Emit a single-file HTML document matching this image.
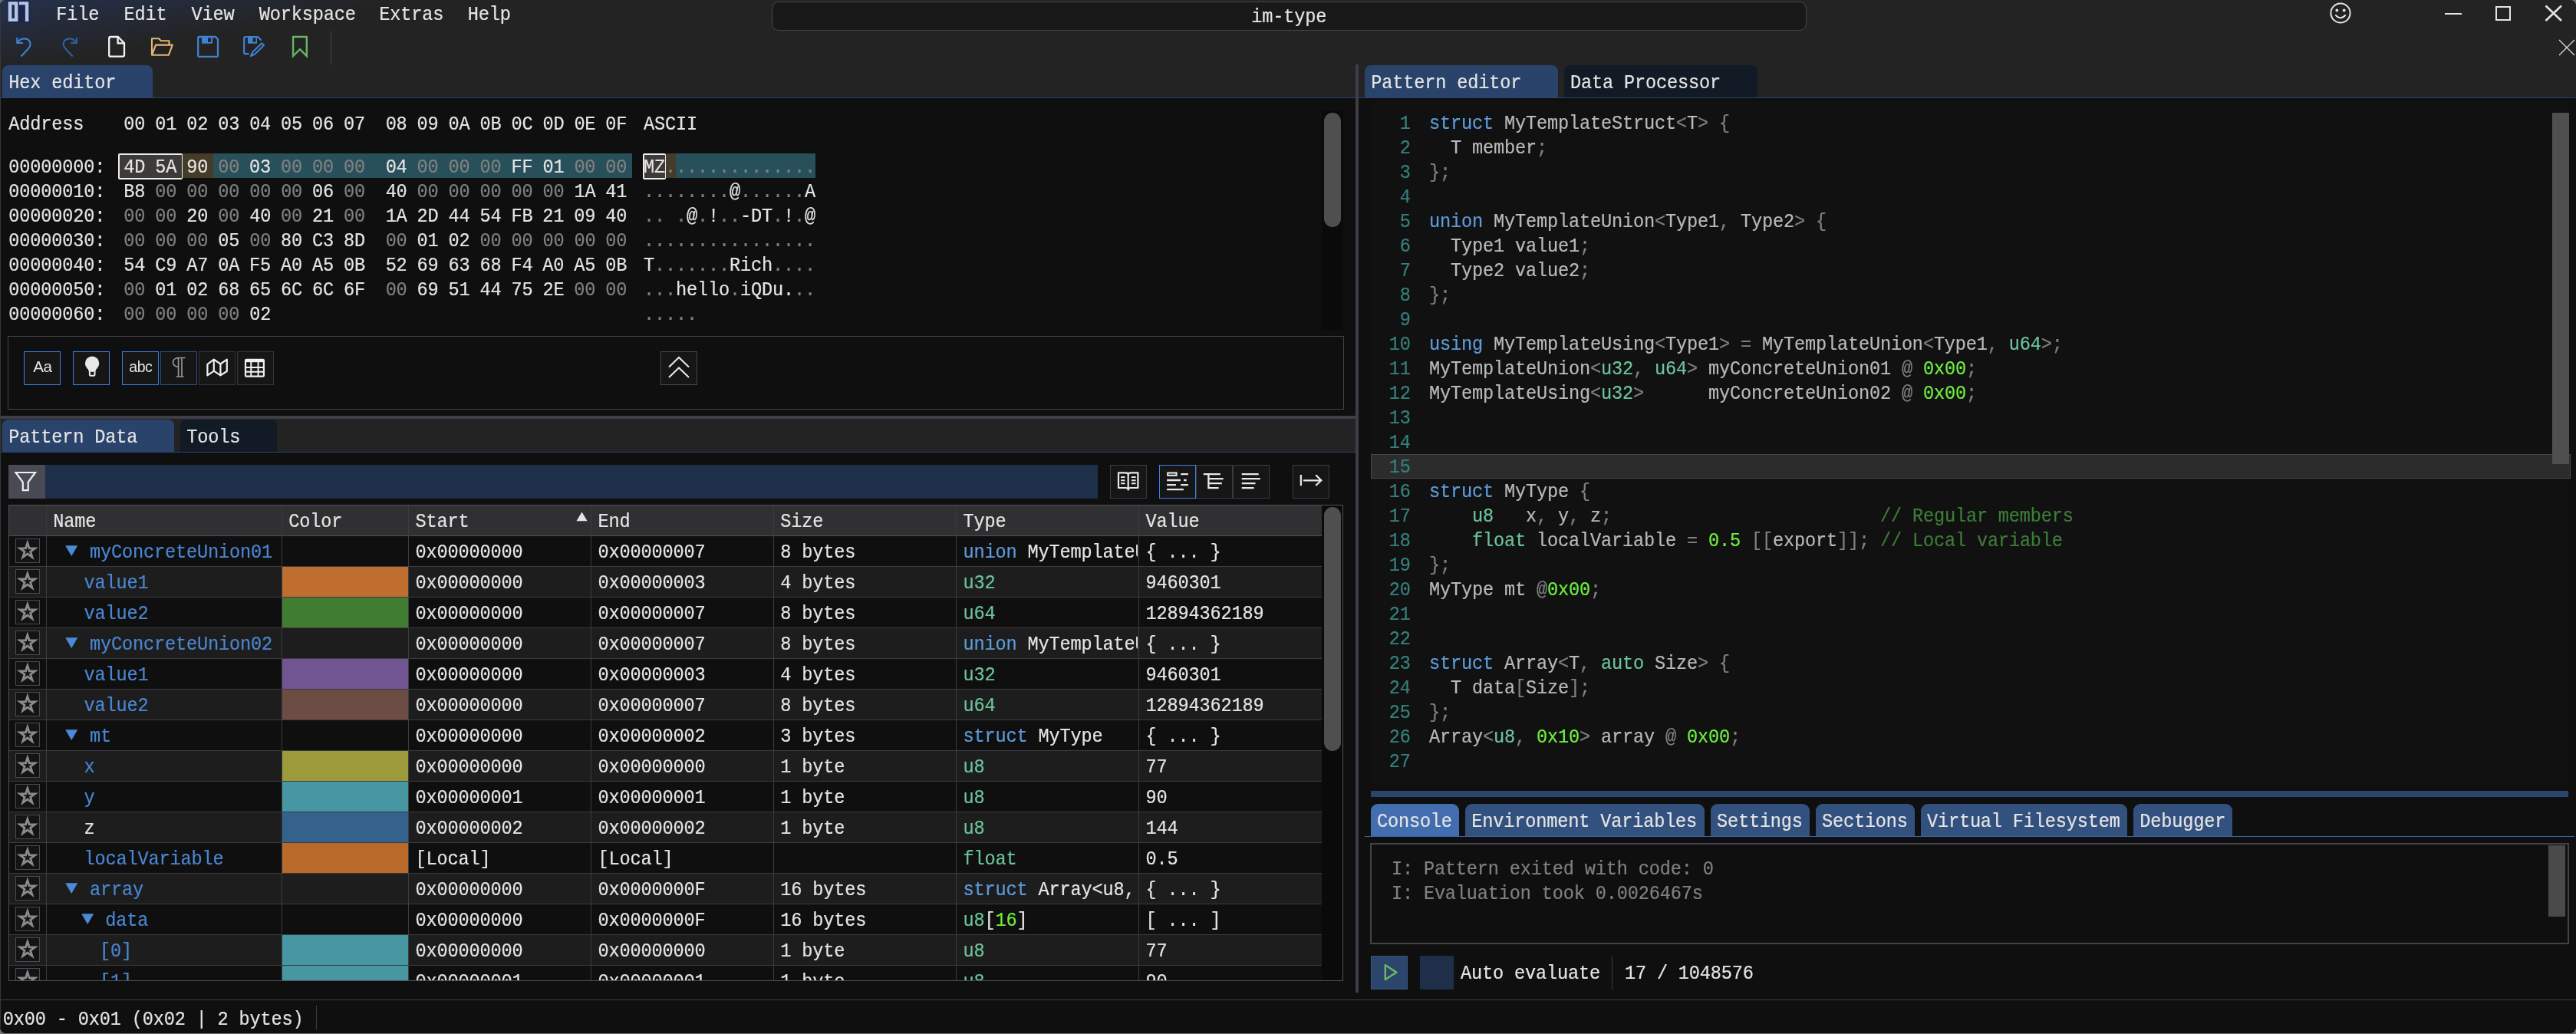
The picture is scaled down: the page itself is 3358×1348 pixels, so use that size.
<!DOCTYPE html>
<html><head><meta charset="utf-8"><title>ImHex</title><style>
html,body{margin:0;padding:0;background:#66727f;}
body{width:3358px;height:1348px;position:relative;overflow:hidden;font-family:"Liberation Mono",monospace;}
.b{position:absolute;box-sizing:border-box;}
.t{position:absolute;white-space:pre;font-family:"Liberation Mono",monospace;font-size:23.6px;line-height:30px;height:30px;color:#e4e4e4;transform:scaleY(1.09);transform-origin:0 21.5px;-webkit-text-stroke:0.2px currentColor;}
.t i{font-style:normal;}
#root{position:absolute;left:0;top:0;width:3358px;height:1347.4px;overflow:hidden;will-change:transform;border-radius:8px;background:#0f0f0f;}
</style></head>
<body><div id="root">
<div class="b" style="left:0.00px;top:0.00px;width:3358.00px;height:128.00px;background:#232323;"></div>
<div class="b" style="left:0.00px;top:0.00px;width:700.00px;height:84.00px;background:linear-gradient(170.2deg, rgba(38,60,110,0.55) 0%, rgba(38,60,110,0) 46%);"></div>
<div class="b" style="left:9.40px;top:0.00px;width:29.20px;height:29.50px;background:#1a2748;"></div>
<svg class="b" style="left:10.00px;top:2.00px;" width="28" height="27" viewBox="0 0 28 27"><path d="M0.7 0.2 H13.4 V26.1 H0.7 Z M5.4 4.25 V21.9 H8.9 V4.25 Z" fill="#b4c4ea" fill-rule="evenodd"/><path d="M15 0.2 H27.3 V26.1 H22.9 V4.25 H15 Z" fill="#b4c4ea"/></svg>
<span class="t" style="left:73.20px;top:4.75px;letter-spacing:-0.162px;">File</span>
<span class="t" style="left:161.40px;top:4.75px;letter-spacing:-0.162px;">Edit</span>
<span class="t" style="left:249.60px;top:4.75px;letter-spacing:-0.162px;">View</span>
<span class="t" style="left:337.80px;top:4.75px;letter-spacing:-0.162px;">Workspace</span>
<span class="t" style="left:494.30px;top:4.75px;letter-spacing:-0.162px;">Extras</span>
<span class="t" style="left:609.80px;top:4.75px;letter-spacing:-0.162px;">Help</span>
<div class="b" style="left:1005.50px;top:2.00px;width:1349.00px;height:38.00px;background:#191919;border:1.2px solid #45454f;border-radius:9px;"></div>
<span class="t" style="left:1631.30px;top:8.10px;letter-spacing:-0.162px;">im-type</span>
<svg class="b" style="left:3036.00px;top:2.00px;" width="30" height="30" viewBox="0 0 30 30"><circle cx="15" cy="15" r="12.6" fill="none" stroke="#e4e4e4" stroke-width="2"/><circle cx="10.3" cy="11.5" r="1.9" fill="#e4e4e4"/><circle cx="19.7" cy="11.5" r="1.9" fill="#e4e4e4"/><path d="M8.3 17.5 Q15 25 21.7 17.5" fill="none" stroke="#e4e4e4" stroke-width="2"/></svg>
<div class="b" style="left:3187.00px;top:16.80px;width:22.00px;height:2.30px;background:#e4e4e4;"></div>
<div class="b" style="left:3253.40px;top:7.60px;width:19.80px;height:19.00px;border:2.2px solid #e4e4e4;"></div>
<svg class="b" style="left:3316.00px;top:5.00px;" width="26" height="24" viewBox="0 0 26 24"><path d="M2.5 2.5 L23 22 M23 2.5 L2.5 22" stroke="#e4e4e4" stroke-width="2.6" fill="none"/></svg>
<svg class="b" style="left:3334.00px;top:50.00px;" width="24" height="24" viewBox="0 0 24 24"><path d="M2 2 L22 22 M22 2 L2 22" stroke="#e4e4e4" stroke-width="1.1" fill="none"/></svg>
<svg class="b" style="left:18.00px;top:44.00px;" width="30" height="34" viewBox="0 0 30 34"><path d="M4.3 5 V12 H12" fill="none" stroke="#3f82d2" stroke-width="2.1"/><path d="M5.2 11.5 C8 5.5 16.5 5 20 9 C23.5 13.5 21 17.5 17.5 21 L9.5 29.5" fill="none" stroke="#3f82d2" stroke-width="2.1"/></svg>
<svg class="b" style="left:75.00px;top:44.00px;" width="30" height="34" viewBox="0 0 30 34"><path d="M24.9 5 V12 H17.2" fill="none" stroke="#2f62a0" stroke-width="2.1"/><path d="M24 11.5 C21.2 5.5 12.7 5 9.2 9 C5.7 13.5 8.2 17.5 11.7 21 L19.7 29.5" fill="none" stroke="#2f62a0" stroke-width="2.1"/></svg>
<svg class="b" style="left:138.00px;top:44.00px;" width="30" height="34" viewBox="0 0 30 34"><path d="M4.2 6 Q4.2 4 6.2 4 H15.8 L24 12.2 V27.8 Q24 29.7 22 29.7 H6.2 Q4.2 29.7 4.2 27.7 Z" fill="none" stroke="#f4f4f4" stroke-width="2.3"/><path d="M15.6 4.5 V12.4 H23.5" fill="none" stroke="#f4f4f4" stroke-width="2.3"/></svg>
<svg class="b" style="left:194.00px;top:44.00px;" width="36" height="34" viewBox="0 0 36 34"><path d="M4 27.5 V6.2 H13 L16 9.2 H26.5 V14.5" fill="none" stroke="#e0b877" stroke-width="2.1" stroke-linejoin="round"/><path d="M4 27.8 L9 14.6 H30.8 L25.8 27.8 Z" fill="none" stroke="#e0b877" stroke-width="2.1" stroke-linejoin="round"/></svg>
<svg class="b" style="left:254.00px;top:44.00px;" width="36" height="34" viewBox="0 0 36 34"><path d="M4.2 5 Q4.2 4 5.2 4 H27 L30 7.2 V28.8 Q30 29.8 29 29.8 H5.2 Q4.2 29.8 4.2 28.8 Z" fill="none" stroke="#3f82d2" stroke-width="2.3"/><path d="M9 4 H23 V12.8 H9 Z M17 5.2 V10.8 H21 V5.2 Z" fill="#3f82d2" fill-rule="evenodd"/></svg>
<svg class="b" style="left:314.00px;top:44.00px;" width="36" height="34" viewBox="0 0 36 34"><path d="M10.6 26.2 H6 Q4.2 26.2 4.2 24.4 V5.8 Q4.2 4 6 4 H22 L26.5 8.5" fill="none" stroke="#3f82d2" stroke-width="2.2"/><path d="M9 4 H21 V12.8 H9 Z M15.6 5.2 V10.8 H19.4 V5.2 Z" fill="#3f82d2" fill-rule="evenodd"/><path d="M13 29.2 L15.2 24 L27.3 12.2 L30 15 L18 26.8 Z" fill="none" stroke="#3f82d2" stroke-width="2" stroke-linejoin="round"/><path d="M12.2 30 L14.6 24.5 L17.6 27.5 Z" fill="#3f82d2"/></svg>
<svg class="b" style="left:378.00px;top:44.00px;" width="28" height="34" viewBox="0 0 28 34"><path d="M4.1 4 H21.8 V29 L13 20.2 L4.1 29 Z" fill="none" stroke="#69b466" stroke-width="2.4" stroke-linejoin="miter"/></svg>
<div class="b" style="left:430.70px;top:40.00px;width:1.30px;height:44.00px;background:#44444c;"></div>
<div class="b" style="left:3.00px;top:85.00px;width:196.00px;height:42.50px;background:#29436b;border-radius:8px 8px 0 0;"></div>
<span class="t" style="left:11.30px;top:93.50px;letter-spacing:-0.162px;">Hex editor</span>
<div class="b" style="left:1779.00px;top:85.00px;width:252.00px;height:42.50px;background:#29436b;border-radius:8px 8px 0 0;"></div>
<span class="t" style="left:1787.20px;top:93.50px;letter-spacing:-0.162px;">Pattern editor</span>
<div class="b" style="left:2038.60px;top:85.00px;width:252.00px;height:42.50px;background:#121a26;border-radius:8px 8px 0 0;"></div>
<span class="t" style="left:2047.00px;top:93.50px;letter-spacing:-0.162px;">Data Processor</span>
<div class="b" style="left:0.00px;top:127.00px;width:3358.00px;height:1.30px;background:#29436b;"></div>
<div class="b" style="left:0.00px;top:128.30px;width:3358.00px;height:1219.70px;background:#0f0f0f;"></div>
<div class="b" style="left:1766.60px;top:84.00px;width:4.60px;height:1210.00px;background:#3e3e47;"></div>
<div class="b" style="left:0.00px;top:542.00px;width:1766.60px;height:4.00px;background:#3e3e47;"></div>
<span class="t" style="left:11.30px;top:147.50px;letter-spacing:-0.162px;">Address</span>
<span class="t" style="left:161.30px;top:147.50px;letter-spacing:-0.162px;">00</span>
<span class="t" style="left:202.26px;top:147.50px;letter-spacing:-0.162px;">01</span>
<span class="t" style="left:243.22px;top:147.50px;letter-spacing:-0.162px;">02</span>
<span class="t" style="left:284.18px;top:147.50px;letter-spacing:-0.162px;">03</span>
<span class="t" style="left:325.14px;top:147.50px;letter-spacing:-0.162px;">04</span>
<span class="t" style="left:366.10px;top:147.50px;letter-spacing:-0.162px;">05</span>
<span class="t" style="left:407.06px;top:147.50px;letter-spacing:-0.162px;">06</span>
<span class="t" style="left:448.02px;top:147.50px;letter-spacing:-0.162px;">07</span>
<span class="t" style="left:502.63px;top:147.50px;letter-spacing:-0.162px;">08</span>
<span class="t" style="left:543.59px;top:147.50px;letter-spacing:-0.162px;">09</span>
<span class="t" style="left:584.55px;top:147.50px;letter-spacing:-0.162px;">0A</span>
<span class="t" style="left:625.51px;top:147.50px;letter-spacing:-0.162px;">0B</span>
<span class="t" style="left:666.47px;top:147.50px;letter-spacing:-0.162px;">0C</span>
<span class="t" style="left:707.43px;top:147.50px;letter-spacing:-0.162px;">0D</span>
<span class="t" style="left:748.39px;top:147.50px;letter-spacing:-0.162px;">0E</span>
<span class="t" style="left:789.35px;top:147.50px;letter-spacing:-0.162px;">0F</span>
<span class="t" style="left:839.00px;top:147.50px;letter-spacing:-0.162px;">ASCII</span>
<div class="b" style="left:278.00px;top:200.00px;width:546.00px;height:32.00px;background:#28505a;"></div>
<div class="b" style="left:237.00px;top:200.00px;width:41.00px;height:32.00px;background:#443b28;"></div>
<div class="b" style="left:154.00px;top:200.00px;width:83.60px;height:33.80px;background:#3d3a37;border:2px solid #ececec;border-radius:2px;border-right-width:1.3px;"></div>
<div class="b" style="left:880.50px;top:200.00px;width:182.30px;height:32.00px;background:#28505a;"></div>
<div class="b" style="left:868.00px;top:200.00px;width:12.70px;height:32.00px;background:#443b28;"></div>
<div class="b" style="left:837.80px;top:200.00px;width:30.60px;height:33.80px;background:#3d3a37;border:2px solid #ececec;border-radius:2px;border-right-width:1.3px;"></div>
<span class="t" style="left:11.30px;top:203.70px;letter-spacing:-0.162px;">00000000:</span>
<span class="t" style="left:161.30px;top:203.70px;letter-spacing:-0.162px;word-spacing:-1.04px;">4D 5A 90 <i style="color:#808080">00</i> 03 <i style="color:#808080">00</i> <i style="color:#808080">00</i> <i style="color:#808080">00</i></span>
<span class="t" style="left:502.63px;top:203.70px;letter-spacing:-0.162px;word-spacing:-1.04px;">04 <i style="color:#808080">00</i> <i style="color:#808080">00</i> <i style="color:#808080">00</i> FF 01 <i style="color:#808080">00</i> <i style="color:#808080">00</i></span>
<span class="t" style="left:839.00px;top:203.70px;letter-spacing:-0.162px;">MZ<i style="color:#808080">.</i><i style="color:#808080">.</i><i style="color:#808080">.</i><i style="color:#808080">.</i><i style="color:#808080">.</i><i style="color:#808080">.</i><i style="color:#808080">.</i><i style="color:#808080">.</i><i style="color:#808080">.</i><i style="color:#808080">.</i><i style="color:#808080">.</i><i style="color:#808080">.</i><i style="color:#808080">.</i><i style="color:#808080">.</i></span>
<span class="t" style="left:11.30px;top:235.70px;letter-spacing:-0.162px;">00000010:</span>
<span class="t" style="left:161.30px;top:235.70px;letter-spacing:-0.162px;word-spacing:-1.04px;">B8 <i style="color:#808080">00</i> <i style="color:#808080">00</i> <i style="color:#808080">00</i> <i style="color:#808080">00</i> <i style="color:#808080">00</i> 06 <i style="color:#808080">00</i></span>
<span class="t" style="left:502.63px;top:235.70px;letter-spacing:-0.162px;word-spacing:-1.04px;">40 <i style="color:#808080">00</i> <i style="color:#808080">00</i> <i style="color:#808080">00</i> <i style="color:#808080">00</i> <i style="color:#808080">00</i> 1A 41</span>
<span class="t" style="left:839.00px;top:235.70px;letter-spacing:-0.162px;"><i style="color:#808080">.</i><i style="color:#808080">.</i><i style="color:#808080">.</i><i style="color:#808080">.</i><i style="color:#808080">.</i><i style="color:#808080">.</i><i style="color:#808080">.</i><i style="color:#808080">.</i>@<i style="color:#808080">.</i><i style="color:#808080">.</i><i style="color:#808080">.</i><i style="color:#808080">.</i><i style="color:#808080">.</i><i style="color:#808080">.</i>A</span>
<span class="t" style="left:11.30px;top:267.70px;letter-spacing:-0.162px;">00000020:</span>
<span class="t" style="left:161.30px;top:267.70px;letter-spacing:-0.162px;word-spacing:-1.04px;"><i style="color:#808080">00</i> <i style="color:#808080">00</i> 20 <i style="color:#808080">00</i> 40 <i style="color:#808080">00</i> 21 <i style="color:#808080">00</i></span>
<span class="t" style="left:502.63px;top:267.70px;letter-spacing:-0.162px;word-spacing:-1.04px;">1A 2D 44 54 FB 21 09 40</span>
<span class="t" style="left:839.00px;top:267.70px;letter-spacing:-0.162px;"><i style="color:#808080">.</i><i style="color:#808080">.</i> <i style="color:#808080">.</i>@<i style="color:#808080">.</i>!<i style="color:#808080">.</i><i style="color:#808080">.</i>-DT<i style="color:#808080">.</i>!<i style="color:#808080">.</i>@</span>
<span class="t" style="left:11.30px;top:299.70px;letter-spacing:-0.162px;">00000030:</span>
<span class="t" style="left:161.30px;top:299.70px;letter-spacing:-0.162px;word-spacing:-1.04px;"><i style="color:#808080">00</i> <i style="color:#808080">00</i> <i style="color:#808080">00</i> 05 <i style="color:#808080">00</i> 80 C3 8D</span>
<span class="t" style="left:502.63px;top:299.70px;letter-spacing:-0.162px;word-spacing:-1.04px;"><i style="color:#808080">00</i> 01 02 <i style="color:#808080">00</i> <i style="color:#808080">00</i> <i style="color:#808080">00</i> <i style="color:#808080">00</i> <i style="color:#808080">00</i></span>
<span class="t" style="left:839.00px;top:299.70px;letter-spacing:-0.162px;"><i style="color:#808080">.</i><i style="color:#808080">.</i><i style="color:#808080">.</i><i style="color:#808080">.</i><i style="color:#808080">.</i><i style="color:#808080">.</i><i style="color:#808080">.</i><i style="color:#808080">.</i><i style="color:#808080">.</i><i style="color:#808080">.</i><i style="color:#808080">.</i><i style="color:#808080">.</i><i style="color:#808080">.</i><i style="color:#808080">.</i><i style="color:#808080">.</i><i style="color:#808080">.</i></span>
<span class="t" style="left:11.30px;top:331.70px;letter-spacing:-0.162px;">00000040:</span>
<span class="t" style="left:161.30px;top:331.70px;letter-spacing:-0.162px;word-spacing:-1.04px;">54 C9 A7 0A F5 A0 A5 0B</span>
<span class="t" style="left:502.63px;top:331.70px;letter-spacing:-0.162px;word-spacing:-1.04px;">52 69 63 68 F4 A0 A5 0B</span>
<span class="t" style="left:839.00px;top:331.70px;letter-spacing:-0.162px;">T<i style="color:#808080">.</i><i style="color:#808080">.</i><i style="color:#808080">.</i><i style="color:#808080">.</i><i style="color:#808080">.</i><i style="color:#808080">.</i><i style="color:#808080">.</i>Rich<i style="color:#808080">.</i><i style="color:#808080">.</i><i style="color:#808080">.</i><i style="color:#808080">.</i></span>
<span class="t" style="left:11.30px;top:363.70px;letter-spacing:-0.162px;">00000050:</span>
<span class="t" style="left:161.30px;top:363.70px;letter-spacing:-0.162px;word-spacing:-1.04px;"><i style="color:#808080">00</i> 01 02 68 65 6C 6C 6F</span>
<span class="t" style="left:502.63px;top:363.70px;letter-spacing:-0.162px;word-spacing:-1.04px;"><i style="color:#808080">00</i> 69 51 44 75 2E <i style="color:#808080">00</i> <i style="color:#808080">00</i></span>
<span class="t" style="left:839.00px;top:363.70px;letter-spacing:-0.162px;"><i style="color:#808080">.</i><i style="color:#808080">.</i><i style="color:#808080">.</i>hello<i style="color:#808080">.</i>iQDu.<i style="color:#808080">.</i><i style="color:#808080">.</i></span>
<span class="t" style="left:11.30px;top:395.70px;letter-spacing:-0.162px;">00000060:</span>
<span class="t" style="left:161.30px;top:395.70px;letter-spacing:-0.162px;word-spacing:-1.04px;"><i style="color:#808080">00</i> <i style="color:#808080">00</i> <i style="color:#808080">00</i> <i style="color:#808080">00</i> 02</span>
<span class="t" style="left:839.00px;top:395.70px;letter-spacing:-0.162px;"><i style="color:#808080">.</i><i style="color:#808080">.</i><i style="color:#808080">.</i><i style="color:#808080">.</i><i style="color:#808080">.</i></span>
<div class="b" style="left:1723.40px;top:144.00px;width:27.60px;height:285.50px;background:#0a0a0a;"></div>
<div class="b" style="left:1726.00px;top:146.70px;width:21.80px;height:149.60px;background:#4f4f4f;border-radius:11px;"></div>
<div class="b" style="left:10.40px;top:438.20px;width:1742.00px;height:96.30px;border:1.9px solid #42424b;"></div>
<div class="b" style="left:31.20px;top:458.00px;width:47.60px;height:43.60px;background:#161616;border:1.2px solid #3d7fe0;"></div>
<div class="b" style="left:95.20px;top:458.00px;width:47.60px;height:43.60px;background:#161616;border:1.2px solid #3d7fe0;"></div>
<div class="b" style="left:159.20px;top:458.00px;width:47.60px;height:43.60px;background:#161616;border:1.2px solid #3d7fe0;"></div>
<div class="b" style="left:209.20px;top:458.00px;width:47.60px;height:43.60px;background:#161616;border:1.2px solid #2b4f8a;"></div>
<div class="b" style="left:259.20px;top:458.00px;width:47.60px;height:43.60px;background:#161616;border:1.2px solid #35353b;"></div>
<div class="b" style="left:309.20px;top:458.00px;width:47.60px;height:43.60px;background:#161616;border:1.2px solid #35353b;"></div>
<div class="b" style="left:861.20px;top:458.00px;width:47.60px;height:43.60px;background:#161616;border:1.2px solid #45454f;"></div>
<span class="b" style="left:43.2px;top:466.2px;font:20.6px 'Liberation Sans',sans-serif;color:#e4e4e4;letter-spacing:-0.4px;line-height:24px">Aa</span>
<svg class="b" style="left:105.00px;top:461.00px;" width="30" height="34" viewBox="0 0 30 34"><circle cx="15.1" cy="12.8" r="9.2" fill="#e8e8e8"/><path d="M10 18.5 H20.2 V22.5 H10 Z" fill="#e8e8e8"/><rect x="11.9" y="22.6" width="6.6" height="6.2" rx="1.2" fill="none" stroke="#e8e8e8" stroke-width="2.1"/></svg>
<span class="b" style="left:168.3px;top:465.6px;font:19.6px 'Liberation Sans',sans-serif;color:#e4e4e4;letter-spacing:-0.55px;line-height:24px">abc</span>
<svg class="b" style="left:219.00px;top:464.00px;" width="26" height="30" viewBox="0 0 26 30"><path d="M12 2.5 H22.5 M13.6 2.5 V27 M18 2.5 V27 M10.5 27 H20.5" stroke="#969696" stroke-width="1.7" fill="none"/><path d="M13.6 2.6 C4.2 2.6 4.2 14.2 13.6 14.2" fill="none" stroke="#969696" stroke-width="1.7"/></svg>
<svg class="b" style="left:260.00px;top:460.00px;" width="44" height="36" viewBox="0 0 44 36"><path d="M10.4 14.9 L18.8 8.7 L27.4 14.5 L35.8 8.7 V24 L27.4 29.4 L18.8 23.6 L10.4 29.4 Z M18.8 8.7 V23.6 M27.4 14.5 V29.4" fill="none" stroke="#f0f0f0" stroke-width="2.2" stroke-linejoin="round"/></svg>
<svg class="b" style="left:310.00px;top:460.00px;" width="44" height="36" viewBox="0 0 44 36"><rect x="10" y="8.8" width="23.9" height="21.9" rx="1.2" fill="none" stroke="#f0f0f0" stroke-width="2.2"/><path d="M10 10.6 H33.9" stroke="#f0f0f0" stroke-width="3.2"/><path d="M10 19 H33.9 M10 24.7 H33.9 M17.3 12 V30.5 M26.6 12 V30.5" stroke="#f0f0f0" stroke-width="2"/></svg>
<svg class="b" style="left:869.00px;top:462.00px;" width="32" height="36" viewBox="0 0 32 36"><path d="M3 16.5 L16 4 L29 16.5 M3 30 L16 17.5 L29 30" fill="none" stroke="#e8e8e8" stroke-width="2"/></svg>
<div class="b" style="left:0.00px;top:546.00px;width:1766.60px;height:43.50px;background:#232323;"></div>
<div class="b" style="left:3.30px;top:547.00px;width:223.70px;height:42.50px;background:#29436b;border-radius:8px 8px 0 0;"></div>
<span class="t" style="left:11.30px;top:555.50px;letter-spacing:-0.162px;">Pattern Data</span>
<div class="b" style="left:235.00px;top:547.00px;width:126.00px;height:42.50px;background:#121a26;border-radius:8px 8px 0 0;"></div>
<span class="t" style="left:243.30px;top:555.50px;letter-spacing:-0.162px;">Tools</span>
<div class="b" style="left:0.00px;top:589.20px;width:1766.60px;height:1.30px;background:#29436b;"></div>
<div class="b" style="left:11.00px;top:605.80px;width:48.00px;height:44.20px;background:#4a4a55;"></div>
<svg class="b" style="left:18.00px;top:612.00px;" width="34" height="32" viewBox="0 0 34 32"><path d="M2.5 4 H28 L18.7 16.5 V27.2 H11.8 V16.5 Z" fill="none" stroke="#f0f0f0" stroke-width="2.2" stroke-linejoin="miter"/></svg>
<div class="b" style="left:59.00px;top:605.80px;width:1372.00px;height:44.20px;background:#1d2f49;"></div>
<div class="b" style="left:1447.20px;top:605.80px;width:47.80px;height:44.20px;background:#161616;border:1.2px solid #3a3a42;"></div>
<div class="b" style="left:1511.00px;top:605.80px;width:47.80px;height:44.20px;background:#161616;border:1.2px solid #3d7fe0;"></div>
<div class="b" style="left:1559.20px;top:605.80px;width:47.80px;height:44.20px;background:#161616;border:1.2px solid #3a3a42;"></div>
<div class="b" style="left:1607.20px;top:605.80px;width:47.80px;height:44.20px;background:#161616;border:1.2px solid #3a3a42;"></div>
<div class="b" style="left:1685.00px;top:605.80px;width:47.80px;height:44.20px;background:#161616;border:1.2px solid #3a3a42;"></div>
<svg class="b" style="left:1447.20px;top:605.80px;" width="48" height="44.2" viewBox="0 0 48 44.2"><path d="M23.7 11 V31.5 M11 10.3 H20.6 Q23.7 10.3 23.7 13 Q23.7 10.3 26.8 10.3 H36.4 V30 H26.8 Q23.7 30 23.7 32.6 Q23.7 30 20.6 30 H11 Z" fill="none" stroke="#e8e8e8" stroke-width="2.2" stroke-linejoin="round"/><path d="M14.1 16.1 H19.5 M14.1 20.3 H19.5 M14.1 24.3 H19.5 M27.9 16.1 H33.6 M27.9 20.3 H33.6 M27.9 24.3 H33.6" stroke="#e8e8e8" stroke-width="2"/></svg>
<svg class="b" style="left:1511.00px;top:605.80px;" width="48" height="44.2" viewBox="0 0 48 44.2"><rect x="11.2" y="10.5" width="11.4" height="3.3" fill="none" stroke="#e8e8e8" stroke-width="2.1"/><path d="M28.2 12.1 H37.9 M10.1 20 H27.9 M32.1 20 H35.7 M10.1 26.1 H21.9 M28.2 26.1 H37.9 M10.1 32.1 H31.9" stroke="#e8e8e8" stroke-width="2.3"/></svg>
<svg class="b" style="left:1559.20px;top:605.80px;" width="48" height="44.2" viewBox="0 0 48 44.2"><path d="M9.8 12.1 H31.8 M16.4 12.1 V30.1 M16.4 18.1 H35.6 M16.4 24.1 H33.8 M15.3 30.1 H29.6" fill="none" stroke="#e8e8e8" stroke-width="2.3"/></svg>
<svg class="b" style="left:1607.20px;top:605.80px;" width="48" height="44.2" viewBox="0 0 48 44.2"><path d="M11.7 12.1 H33.7 M11.7 18.1 H35.8 M11.7 24.1 H29.5 M11.7 30.1 H27.6" stroke="#e8e8e8" stroke-width="2.3"/></svg>
<svg class="b" style="left:1685.00px;top:605.80px;" width="48" height="44.2" viewBox="0 0 48 44.2"><path d="M10.9 13 V27.3 M13.9 20.3 H36.6 M30.2 13.3 L37.3 20.3 L30.2 27" fill="none" stroke="#e8e8e8" stroke-width="2.3"/></svg>
<div class="b" style="left:11.00px;top:658.50px;width:1712.00px;height:40.00px;background:#303033;"></div>
<div class="b" style="left:11.00px;top:698.50px;width:1712.00px;height:40.00px;background:#0f0f0f;"></div>
<div class="b" style="left:11.00px;top:738.50px;width:1712.00px;height:40.00px;background:#1d1d1d;"></div>
<div class="b" style="left:11.00px;top:778.50px;width:1712.00px;height:40.00px;background:#0f0f0f;"></div>
<div class="b" style="left:11.00px;top:818.50px;width:1712.00px;height:40.00px;background:#1d1d1d;"></div>
<div class="b" style="left:11.00px;top:858.50px;width:1712.00px;height:40.00px;background:#0f0f0f;"></div>
<div class="b" style="left:11.00px;top:898.50px;width:1712.00px;height:40.00px;background:#1d1d1d;"></div>
<div class="b" style="left:11.00px;top:938.50px;width:1712.00px;height:40.00px;background:#0f0f0f;"></div>
<div class="b" style="left:11.00px;top:978.50px;width:1712.00px;height:40.00px;background:#1d1d1d;"></div>
<div class="b" style="left:11.00px;top:1018.50px;width:1712.00px;height:40.00px;background:#0f0f0f;"></div>
<div class="b" style="left:11.00px;top:1058.50px;width:1712.00px;height:40.00px;background:#1d1d1d;"></div>
<div class="b" style="left:11.00px;top:1098.50px;width:1712.00px;height:40.00px;background:#0f0f0f;"></div>
<div class="b" style="left:11.00px;top:1138.50px;width:1712.00px;height:40.00px;background:#1d1d1d;"></div>
<div class="b" style="left:11.00px;top:1178.50px;width:1712.00px;height:40.00px;background:#0f0f0f;"></div>
<div class="b" style="left:11.00px;top:1218.50px;width:1712.00px;height:40.00px;background:#1d1d1d;"></div>
<div class="b" style="left:11.00px;top:1258.50px;width:1712.00px;height:20.00px;background:#0f0f0f;"></div>
<div class="b" style="left:0;top:0;width:3358px;height:1278.5px;overflow:hidden;">
<div class="b" style="left:20.00px;top:702.20px;width:32.00px;height:31.90px;background:#141414;border:1.1px solid #4a4a55;"></div>
<svg class="b" style="left:20.00px;top:702.20px;" width="32" height="32" viewBox="0 0 32 32"><polygon points="15.85,1.15 19.20,11.44 30.02,11.45 21.27,17.81 24.61,28.10 15.85,21.75 7.09,28.10 10.43,17.81 1.68,11.45 12.50,11.44" fill="#8b8b8b"/><polygon points="15.85,10.15 17.17,14.23 21.46,14.23 17.99,16.75 19.32,20.82 15.85,18.30 12.38,20.82 13.71,16.75 10.24,14.23 14.53,14.23" fill="#151515"/></svg>
<svg class="b" style="left:84.80px;top:711.00px;" width="17" height="15" viewBox="0 0 17 15"><path d="M0.2 0.3 H16.2 L8.2 14 Z" fill="#4a8ad8"/></svg>
<span class="t" style="left:117.00px;top:705.80px;letter-spacing:-0.162px;color:#4a86d2;">myConcreteUnion01</span>
<span class="t" style="left:541.50px;top:705.80px;letter-spacing:-0.162px;">0x00000000</span>
<span class="t" style="left:779.50px;top:705.80px;letter-spacing:-0.162px;">0x00000007</span>
<span class="t" style="left:1017.30px;top:705.80px;letter-spacing:-0.162px;">8 bytes</span>
<span class="t" style="left:1255.50px;top:705.80px;letter-spacing:-0.162px;width:227.7px;overflow:hidden;"><i style="color:#5c9cdc">union</i> MyTemplateUnion&lt;u32, u64&gt;</span>
<span class="t" style="left:1493.50px;top:705.80px;letter-spacing:-0.162px;">{ ... }</span>
<div class="b" style="left:368.20px;top:739.10px;width:164.00px;height:39.20px;background:#bf6e2f;"></div>
<div class="b" style="left:20.00px;top:742.20px;width:32.00px;height:31.90px;background:#141414;border:1.1px solid #4a4a55;"></div>
<svg class="b" style="left:20.00px;top:742.20px;" width="32" height="32" viewBox="0 0 32 32"><polygon points="15.85,1.15 19.20,11.44 30.02,11.45 21.27,17.81 24.61,28.10 15.85,21.75 7.09,28.10 10.43,17.81 1.68,11.45 12.50,11.44" fill="#8b8b8b"/><polygon points="15.85,10.15 17.17,14.23 21.46,14.23 17.99,16.75 19.32,20.82 15.85,18.30 12.38,20.82 13.71,16.75 10.24,14.23 14.53,14.23" fill="#151515"/></svg>
<span class="t" style="left:109.50px;top:745.80px;letter-spacing:-0.162px;color:#4a86d2;">value1</span>
<span class="t" style="left:541.50px;top:745.80px;letter-spacing:-0.162px;">0x00000000</span>
<span class="t" style="left:779.50px;top:745.80px;letter-spacing:-0.162px;">0x00000003</span>
<span class="t" style="left:1017.30px;top:745.80px;letter-spacing:-0.162px;">4 bytes</span>
<span class="t" style="left:1255.50px;top:745.80px;letter-spacing:-0.162px;width:227.7px;overflow:hidden;"><i style="color:#6cc49c">u32</i></span>
<span class="t" style="left:1493.50px;top:745.80px;letter-spacing:-0.162px;">9460301</span>
<div class="b" style="left:368.20px;top:779.10px;width:164.00px;height:39.20px;background:#417c33;"></div>
<div class="b" style="left:20.00px;top:782.20px;width:32.00px;height:31.90px;background:#141414;border:1.1px solid #4a4a55;"></div>
<svg class="b" style="left:20.00px;top:782.20px;" width="32" height="32" viewBox="0 0 32 32"><polygon points="15.85,1.15 19.20,11.44 30.02,11.45 21.27,17.81 24.61,28.10 15.85,21.75 7.09,28.10 10.43,17.81 1.68,11.45 12.50,11.44" fill="#8b8b8b"/><polygon points="15.85,10.15 17.17,14.23 21.46,14.23 17.99,16.75 19.32,20.82 15.85,18.30 12.38,20.82 13.71,16.75 10.24,14.23 14.53,14.23" fill="#151515"/></svg>
<span class="t" style="left:109.50px;top:785.80px;letter-spacing:-0.162px;color:#4a86d2;">value2</span>
<span class="t" style="left:541.50px;top:785.80px;letter-spacing:-0.162px;">0x00000000</span>
<span class="t" style="left:779.50px;top:785.80px;letter-spacing:-0.162px;">0x00000007</span>
<span class="t" style="left:1017.30px;top:785.80px;letter-spacing:-0.162px;">8 bytes</span>
<span class="t" style="left:1255.50px;top:785.80px;letter-spacing:-0.162px;width:227.7px;overflow:hidden;"><i style="color:#6cc49c">u64</i></span>
<span class="t" style="left:1493.50px;top:785.80px;letter-spacing:-0.162px;">12894362189</span>
<div class="b" style="left:20.00px;top:822.20px;width:32.00px;height:31.90px;background:#141414;border:1.1px solid #4a4a55;"></div>
<svg class="b" style="left:20.00px;top:822.20px;" width="32" height="32" viewBox="0 0 32 32"><polygon points="15.85,1.15 19.20,11.44 30.02,11.45 21.27,17.81 24.61,28.10 15.85,21.75 7.09,28.10 10.43,17.81 1.68,11.45 12.50,11.44" fill="#8b8b8b"/><polygon points="15.85,10.15 17.17,14.23 21.46,14.23 17.99,16.75 19.32,20.82 15.85,18.30 12.38,20.82 13.71,16.75 10.24,14.23 14.53,14.23" fill="#151515"/></svg>
<svg class="b" style="left:84.80px;top:831.00px;" width="17" height="15" viewBox="0 0 17 15"><path d="M0.2 0.3 H16.2 L8.2 14 Z" fill="#4a8ad8"/></svg>
<span class="t" style="left:117.00px;top:825.80px;letter-spacing:-0.162px;color:#4a86d2;">myConcreteUnion02</span>
<span class="t" style="left:541.50px;top:825.80px;letter-spacing:-0.162px;">0x00000000</span>
<span class="t" style="left:779.50px;top:825.80px;letter-spacing:-0.162px;">0x00000007</span>
<span class="t" style="left:1017.30px;top:825.80px;letter-spacing:-0.162px;">8 bytes</span>
<span class="t" style="left:1255.50px;top:825.80px;letter-spacing:-0.162px;width:227.7px;overflow:hidden;"><i style="color:#5c9cdc">union</i> MyTemplateUnion&lt;u32, u64&gt;</span>
<span class="t" style="left:1493.50px;top:825.80px;letter-spacing:-0.162px;">{ ... }</span>
<div class="b" style="left:368.20px;top:859.10px;width:164.00px;height:39.20px;background:#705592;"></div>
<div class="b" style="left:20.00px;top:862.20px;width:32.00px;height:31.90px;background:#141414;border:1.1px solid #4a4a55;"></div>
<svg class="b" style="left:20.00px;top:862.20px;" width="32" height="32" viewBox="0 0 32 32"><polygon points="15.85,1.15 19.20,11.44 30.02,11.45 21.27,17.81 24.61,28.10 15.85,21.75 7.09,28.10 10.43,17.81 1.68,11.45 12.50,11.44" fill="#8b8b8b"/><polygon points="15.85,10.15 17.17,14.23 21.46,14.23 17.99,16.75 19.32,20.82 15.85,18.30 12.38,20.82 13.71,16.75 10.24,14.23 14.53,14.23" fill="#151515"/></svg>
<span class="t" style="left:109.50px;top:865.80px;letter-spacing:-0.162px;color:#4a86d2;">value1</span>
<span class="t" style="left:541.50px;top:865.80px;letter-spacing:-0.162px;">0x00000000</span>
<span class="t" style="left:779.50px;top:865.80px;letter-spacing:-0.162px;">0x00000003</span>
<span class="t" style="left:1017.30px;top:865.80px;letter-spacing:-0.162px;">4 bytes</span>
<span class="t" style="left:1255.50px;top:865.80px;letter-spacing:-0.162px;width:227.7px;overflow:hidden;"><i style="color:#6cc49c">u32</i></span>
<span class="t" style="left:1493.50px;top:865.80px;letter-spacing:-0.162px;">9460301</span>
<div class="b" style="left:368.20px;top:899.10px;width:164.00px;height:39.20px;background:#6d4c43;"></div>
<div class="b" style="left:20.00px;top:902.20px;width:32.00px;height:31.90px;background:#141414;border:1.1px solid #4a4a55;"></div>
<svg class="b" style="left:20.00px;top:902.20px;" width="32" height="32" viewBox="0 0 32 32"><polygon points="15.85,1.15 19.20,11.44 30.02,11.45 21.27,17.81 24.61,28.10 15.85,21.75 7.09,28.10 10.43,17.81 1.68,11.45 12.50,11.44" fill="#8b8b8b"/><polygon points="15.85,10.15 17.17,14.23 21.46,14.23 17.99,16.75 19.32,20.82 15.85,18.30 12.38,20.82 13.71,16.75 10.24,14.23 14.53,14.23" fill="#151515"/></svg>
<span class="t" style="left:109.50px;top:905.80px;letter-spacing:-0.162px;color:#4a86d2;">value2</span>
<span class="t" style="left:541.50px;top:905.80px;letter-spacing:-0.162px;">0x00000000</span>
<span class="t" style="left:779.50px;top:905.80px;letter-spacing:-0.162px;">0x00000007</span>
<span class="t" style="left:1017.30px;top:905.80px;letter-spacing:-0.162px;">8 bytes</span>
<span class="t" style="left:1255.50px;top:905.80px;letter-spacing:-0.162px;width:227.7px;overflow:hidden;"><i style="color:#6cc49c">u64</i></span>
<span class="t" style="left:1493.50px;top:905.80px;letter-spacing:-0.162px;">12894362189</span>
<div class="b" style="left:20.00px;top:942.20px;width:32.00px;height:31.90px;background:#141414;border:1.1px solid #4a4a55;"></div>
<svg class="b" style="left:20.00px;top:942.20px;" width="32" height="32" viewBox="0 0 32 32"><polygon points="15.85,1.15 19.20,11.44 30.02,11.45 21.27,17.81 24.61,28.10 15.85,21.75 7.09,28.10 10.43,17.81 1.68,11.45 12.50,11.44" fill="#8b8b8b"/><polygon points="15.85,10.15 17.17,14.23 21.46,14.23 17.99,16.75 19.32,20.82 15.85,18.30 12.38,20.82 13.71,16.75 10.24,14.23 14.53,14.23" fill="#151515"/></svg>
<svg class="b" style="left:84.80px;top:951.00px;" width="17" height="15" viewBox="0 0 17 15"><path d="M0.2 0.3 H16.2 L8.2 14 Z" fill="#4a8ad8"/></svg>
<span class="t" style="left:117.00px;top:945.80px;letter-spacing:-0.162px;color:#4a86d2;">mt</span>
<span class="t" style="left:541.50px;top:945.80px;letter-spacing:-0.162px;">0x00000000</span>
<span class="t" style="left:779.50px;top:945.80px;letter-spacing:-0.162px;">0x00000002</span>
<span class="t" style="left:1017.30px;top:945.80px;letter-spacing:-0.162px;">3 bytes</span>
<span class="t" style="left:1255.50px;top:945.80px;letter-spacing:-0.162px;width:227.7px;overflow:hidden;"><i style="color:#5c9cdc">struct</i> MyType</span>
<span class="t" style="left:1493.50px;top:945.80px;letter-spacing:-0.162px;">{ ... }</span>
<div class="b" style="left:368.20px;top:979.10px;width:164.00px;height:39.20px;background:#9c9a3b;"></div>
<div class="b" style="left:20.00px;top:982.20px;width:32.00px;height:31.90px;background:#141414;border:1.1px solid #4a4a55;"></div>
<svg class="b" style="left:20.00px;top:982.20px;" width="32" height="32" viewBox="0 0 32 32"><polygon points="15.85,1.15 19.20,11.44 30.02,11.45 21.27,17.81 24.61,28.10 15.85,21.75 7.09,28.10 10.43,17.81 1.68,11.45 12.50,11.44" fill="#8b8b8b"/><polygon points="15.85,10.15 17.17,14.23 21.46,14.23 17.99,16.75 19.32,20.82 15.85,18.30 12.38,20.82 13.71,16.75 10.24,14.23 14.53,14.23" fill="#151515"/></svg>
<span class="t" style="left:109.50px;top:985.80px;letter-spacing:-0.162px;color:#4a86d2;">x</span>
<span class="t" style="left:541.50px;top:985.80px;letter-spacing:-0.162px;">0x00000000</span>
<span class="t" style="left:779.50px;top:985.80px;letter-spacing:-0.162px;">0x00000000</span>
<span class="t" style="left:1017.30px;top:985.80px;letter-spacing:-0.162px;">1 byte</span>
<span class="t" style="left:1255.50px;top:985.80px;letter-spacing:-0.162px;width:227.7px;overflow:hidden;"><i style="color:#6cc49c">u8</i></span>
<span class="t" style="left:1493.50px;top:985.80px;letter-spacing:-0.162px;">77</span>
<div class="b" style="left:368.20px;top:1019.10px;width:164.00px;height:39.20px;background:#4797a3;"></div>
<div class="b" style="left:20.00px;top:1022.20px;width:32.00px;height:31.90px;background:#141414;border:1.1px solid #4a4a55;"></div>
<svg class="b" style="left:20.00px;top:1022.20px;" width="32" height="32" viewBox="0 0 32 32"><polygon points="15.85,1.15 19.20,11.44 30.02,11.45 21.27,17.81 24.61,28.10 15.85,21.75 7.09,28.10 10.43,17.81 1.68,11.45 12.50,11.44" fill="#8b8b8b"/><polygon points="15.85,10.15 17.17,14.23 21.46,14.23 17.99,16.75 19.32,20.82 15.85,18.30 12.38,20.82 13.71,16.75 10.24,14.23 14.53,14.23" fill="#151515"/></svg>
<span class="t" style="left:109.50px;top:1025.80px;letter-spacing:-0.162px;color:#4a86d2;">y</span>
<span class="t" style="left:541.50px;top:1025.80px;letter-spacing:-0.162px;">0x00000001</span>
<span class="t" style="left:779.50px;top:1025.80px;letter-spacing:-0.162px;">0x00000001</span>
<span class="t" style="left:1017.30px;top:1025.80px;letter-spacing:-0.162px;">1 byte</span>
<span class="t" style="left:1255.50px;top:1025.80px;letter-spacing:-0.162px;width:227.7px;overflow:hidden;"><i style="color:#6cc49c">u8</i></span>
<span class="t" style="left:1493.50px;top:1025.80px;letter-spacing:-0.162px;">90</span>
<div class="b" style="left:368.20px;top:1059.10px;width:164.00px;height:39.20px;background:#35618d;"></div>
<div class="b" style="left:20.00px;top:1062.20px;width:32.00px;height:31.90px;background:#141414;border:1.1px solid #4a4a55;"></div>
<svg class="b" style="left:20.00px;top:1062.20px;" width="32" height="32" viewBox="0 0 32 32"><polygon points="15.85,1.15 19.20,11.44 30.02,11.45 21.27,17.81 24.61,28.10 15.85,21.75 7.09,28.10 10.43,17.81 1.68,11.45 12.50,11.44" fill="#8b8b8b"/><polygon points="15.85,10.15 17.17,14.23 21.46,14.23 17.99,16.75 19.32,20.82 15.85,18.30 12.38,20.82 13.71,16.75 10.24,14.23 14.53,14.23" fill="#151515"/></svg>
<span class="t" style="left:109.50px;top:1065.80px;letter-spacing:-0.162px;color:#e4e4e4;">z</span>
<span class="t" style="left:541.50px;top:1065.80px;letter-spacing:-0.162px;">0x00000002</span>
<span class="t" style="left:779.50px;top:1065.80px;letter-spacing:-0.162px;">0x00000002</span>
<span class="t" style="left:1017.30px;top:1065.80px;letter-spacing:-0.162px;">1 byte</span>
<span class="t" style="left:1255.50px;top:1065.80px;letter-spacing:-0.162px;width:227.7px;overflow:hidden;"><i style="color:#6cc49c">u8</i></span>
<span class="t" style="left:1493.50px;top:1065.80px;letter-spacing:-0.162px;">144</span>
<div class="b" style="left:368.20px;top:1099.10px;width:164.00px;height:39.20px;background:#b96a2a;"></div>
<div class="b" style="left:20.00px;top:1102.20px;width:32.00px;height:31.90px;background:#141414;border:1.1px solid #4a4a55;"></div>
<svg class="b" style="left:20.00px;top:1102.20px;" width="32" height="32" viewBox="0 0 32 32"><polygon points="15.85,1.15 19.20,11.44 30.02,11.45 21.27,17.81 24.61,28.10 15.85,21.75 7.09,28.10 10.43,17.81 1.68,11.45 12.50,11.44" fill="#8b8b8b"/><polygon points="15.85,10.15 17.17,14.23 21.46,14.23 17.99,16.75 19.32,20.82 15.85,18.30 12.38,20.82 13.71,16.75 10.24,14.23 14.53,14.23" fill="#151515"/></svg>
<span class="t" style="left:109.50px;top:1105.80px;letter-spacing:-0.162px;color:#4a86d2;">localVariable</span>
<span class="t" style="left:541.50px;top:1105.80px;letter-spacing:-0.162px;">[Local]</span>
<span class="t" style="left:779.50px;top:1105.80px;letter-spacing:-0.162px;">[Local]</span>
<span class="t" style="left:1255.50px;top:1105.80px;letter-spacing:-0.162px;width:227.7px;overflow:hidden;"><i style="color:#6cc49c">float</i></span>
<span class="t" style="left:1493.50px;top:1105.80px;letter-spacing:-0.162px;">0.5</span>
<div class="b" style="left:20.00px;top:1142.20px;width:32.00px;height:31.90px;background:#141414;border:1.1px solid #4a4a55;"></div>
<svg class="b" style="left:20.00px;top:1142.20px;" width="32" height="32" viewBox="0 0 32 32"><polygon points="15.85,1.15 19.20,11.44 30.02,11.45 21.27,17.81 24.61,28.10 15.85,21.75 7.09,28.10 10.43,17.81 1.68,11.45 12.50,11.44" fill="#8b8b8b"/><polygon points="15.85,10.15 17.17,14.23 21.46,14.23 17.99,16.75 19.32,20.82 15.85,18.30 12.38,20.82 13.71,16.75 10.24,14.23 14.53,14.23" fill="#151515"/></svg>
<svg class="b" style="left:84.80px;top:1151.00px;" width="17" height="15" viewBox="0 0 17 15"><path d="M0.2 0.3 H16.2 L8.2 14 Z" fill="#4a8ad8"/></svg>
<span class="t" style="left:117.00px;top:1145.80px;letter-spacing:-0.162px;color:#4a86d2;">array</span>
<span class="t" style="left:541.50px;top:1145.80px;letter-spacing:-0.162px;">0x00000000</span>
<span class="t" style="left:779.50px;top:1145.80px;letter-spacing:-0.162px;">0x0000000F</span>
<span class="t" style="left:1017.30px;top:1145.80px;letter-spacing:-0.162px;">16 bytes</span>
<span class="t" style="left:1255.50px;top:1145.80px;letter-spacing:-0.162px;width:227.7px;overflow:hidden;"><i style="color:#5c9cdc">struct</i> Array&lt;u8, 16&gt;</span>
<span class="t" style="left:1493.50px;top:1145.80px;letter-spacing:-0.162px;">{ ... }</span>
<div class="b" style="left:20.00px;top:1182.20px;width:32.00px;height:31.90px;background:#141414;border:1.1px solid #4a4a55;"></div>
<svg class="b" style="left:20.00px;top:1182.20px;" width="32" height="32" viewBox="0 0 32 32"><polygon points="15.85,1.15 19.20,11.44 30.02,11.45 21.27,17.81 24.61,28.10 15.85,21.75 7.09,28.10 10.43,17.81 1.68,11.45 12.50,11.44" fill="#8b8b8b"/><polygon points="15.85,10.15 17.17,14.23 21.46,14.23 17.99,16.75 19.32,20.82 15.85,18.30 12.38,20.82 13.71,16.75 10.24,14.23 14.53,14.23" fill="#151515"/></svg>
<svg class="b" style="left:105.80px;top:1191.00px;" width="17" height="15" viewBox="0 0 17 15"><path d="M0.2 0.3 H16.2 L8.2 14 Z" fill="#4a8ad8"/></svg>
<span class="t" style="left:137.20px;top:1185.80px;letter-spacing:-0.162px;color:#4a86d2;">data</span>
<span class="t" style="left:541.50px;top:1185.80px;letter-spacing:-0.162px;">0x00000000</span>
<span class="t" style="left:779.50px;top:1185.80px;letter-spacing:-0.162px;">0x0000000F</span>
<span class="t" style="left:1017.30px;top:1185.80px;letter-spacing:-0.162px;">16 bytes</span>
<span class="t" style="left:1255.50px;top:1185.80px;letter-spacing:-0.162px;width:227.7px;overflow:hidden;"><i style="color:#6cc49c">u8</i>[<i style="color:#6ef040">16</i>]</span>
<span class="t" style="left:1493.50px;top:1185.80px;letter-spacing:-0.162px;">[ ... ]</span>
<div class="b" style="left:368.20px;top:1219.10px;width:164.00px;height:39.20px;background:#4797a3;"></div>
<div class="b" style="left:20.00px;top:1222.20px;width:32.00px;height:31.90px;background:#141414;border:1.1px solid #4a4a55;"></div>
<svg class="b" style="left:20.00px;top:1222.20px;" width="32" height="32" viewBox="0 0 32 32"><polygon points="15.85,1.15 19.20,11.44 30.02,11.45 21.27,17.81 24.61,28.10 15.85,21.75 7.09,28.10 10.43,17.81 1.68,11.45 12.50,11.44" fill="#8b8b8b"/><polygon points="15.85,10.15 17.17,14.23 21.46,14.23 17.99,16.75 19.32,20.82 15.85,18.30 12.38,20.82 13.71,16.75 10.24,14.23 14.53,14.23" fill="#151515"/></svg>
<span class="t" style="left:129.90px;top:1225.80px;letter-spacing:-0.162px;color:#4a86d2;">[0]</span>
<span class="t" style="left:541.50px;top:1225.80px;letter-spacing:-0.162px;">0x00000000</span>
<span class="t" style="left:779.50px;top:1225.80px;letter-spacing:-0.162px;">0x00000000</span>
<span class="t" style="left:1017.30px;top:1225.80px;letter-spacing:-0.162px;">1 byte</span>
<span class="t" style="left:1255.50px;top:1225.80px;letter-spacing:-0.162px;width:227.7px;overflow:hidden;"><i style="color:#6cc49c">u8</i></span>
<span class="t" style="left:1493.50px;top:1225.80px;letter-spacing:-0.162px;">77</span>
<div class="b" style="left:368.20px;top:1259.10px;width:164.00px;height:39.20px;background:#4797a3;"></div>
<div class="b" style="left:20.00px;top:1262.20px;width:32.00px;height:31.90px;background:#141414;border:1.1px solid #4a4a55;"></div>
<svg class="b" style="left:20.00px;top:1262.20px;" width="32" height="32" viewBox="0 0 32 32"><polygon points="15.85,1.15 19.20,11.44 30.02,11.45 21.27,17.81 24.61,28.10 15.85,21.75 7.09,28.10 10.43,17.81 1.68,11.45 12.50,11.44" fill="#8b8b8b"/><polygon points="15.85,10.15 17.17,14.23 21.46,14.23 17.99,16.75 19.32,20.82 15.85,18.30 12.38,20.82 13.71,16.75 10.24,14.23 14.53,14.23" fill="#151515"/></svg>
<span class="t" style="left:129.90px;top:1265.80px;letter-spacing:-0.162px;color:#4a86d2;">[1]</span>
<span class="t" style="left:541.50px;top:1265.80px;letter-spacing:-0.162px;">0x00000001</span>
<span class="t" style="left:779.50px;top:1265.80px;letter-spacing:-0.162px;">0x00000001</span>
<span class="t" style="left:1017.30px;top:1265.80px;letter-spacing:-0.162px;">1 byte</span>
<span class="t" style="left:1255.50px;top:1265.80px;letter-spacing:-0.162px;width:227.7px;overflow:hidden;"><i style="color:#6cc49c">u8</i></span>
<span class="t" style="left:1493.50px;top:1265.80px;letter-spacing:-0.162px;">90</span>
</div>
<div class="b" style="left:11.00px;top:698.00px;width:1712.00px;height:1.00px;background:#4f4f59;"></div>
<div class="b" style="left:11.00px;top:738.00px;width:1712.00px;height:1.00px;background:#3b3b40;"></div>
<div class="b" style="left:11.00px;top:778.00px;width:1712.00px;height:1.00px;background:#3b3b40;"></div>
<div class="b" style="left:11.00px;top:818.00px;width:1712.00px;height:1.00px;background:#3b3b40;"></div>
<div class="b" style="left:11.00px;top:858.00px;width:1712.00px;height:1.00px;background:#3b3b40;"></div>
<div class="b" style="left:11.00px;top:898.00px;width:1712.00px;height:1.00px;background:#3b3b40;"></div>
<div class="b" style="left:11.00px;top:938.00px;width:1712.00px;height:1.00px;background:#3b3b40;"></div>
<div class="b" style="left:11.00px;top:978.00px;width:1712.00px;height:1.00px;background:#3b3b40;"></div>
<div class="b" style="left:11.00px;top:1018.00px;width:1712.00px;height:1.00px;background:#3b3b40;"></div>
<div class="b" style="left:11.00px;top:1058.00px;width:1712.00px;height:1.00px;background:#3b3b40;"></div>
<div class="b" style="left:11.00px;top:1098.00px;width:1712.00px;height:1.00px;background:#3b3b40;"></div>
<div class="b" style="left:11.00px;top:1138.00px;width:1712.00px;height:1.00px;background:#3b3b40;"></div>
<div class="b" style="left:11.00px;top:1178.00px;width:1712.00px;height:1.00px;background:#3b3b40;"></div>
<div class="b" style="left:11.00px;top:1218.00px;width:1712.00px;height:1.00px;background:#3b3b40;"></div>
<div class="b" style="left:11.00px;top:1258.00px;width:1712.00px;height:1.00px;background:#3b3b40;"></div>
<div class="b" style="left:60.00px;top:658.50px;width:1.00px;height:620.00px;background:#3b3b40;"></div>
<div class="b" style="left:367.00px;top:658.50px;width:1.00px;height:620.00px;background:#3b3b40;"></div>
<div class="b" style="left:532.00px;top:658.50px;width:1.00px;height:620.00px;background:#3b3b40;"></div>
<div class="b" style="left:770.00px;top:658.50px;width:1.00px;height:620.00px;background:#3b3b40;"></div>
<div class="b" style="left:1008.00px;top:658.50px;width:1.00px;height:620.00px;background:#3b3b40;"></div>
<div class="b" style="left:1246.00px;top:658.50px;width:1.00px;height:620.00px;background:#3b3b40;"></div>
<div class="b" style="left:1484.00px;top:658.50px;width:1.00px;height:620.00px;background:#3b3b40;"></div>
<div class="b" style="left:11.00px;top:658.00px;width:1740.00px;height:621.00px;border:1px solid #4f4f59;"></div>
<span class="t" style="left:69.30px;top:665.50px;letter-spacing:-0.162px;">Name</span>
<span class="t" style="left:376.30px;top:665.50px;letter-spacing:-0.162px;">Color</span>
<span class="t" style="left:541.50px;top:665.50px;letter-spacing:-0.162px;">Start</span>
<span class="t" style="left:779.50px;top:665.50px;letter-spacing:-0.162px;">End</span>
<span class="t" style="left:1017.30px;top:665.50px;letter-spacing:-0.162px;">Size</span>
<span class="t" style="left:1255.50px;top:665.50px;letter-spacing:-0.162px;">Type</span>
<span class="t" style="left:1493.50px;top:665.50px;letter-spacing:-0.162px;">Value</span>
<svg class="b" style="left:750.50px;top:667.00px;" width="15" height="13" viewBox="0 0 15 13"><path d="M7.5 0.5 L14.6 12.2 H0.4 Z" fill="#e4e4e4"/></svg>
<div class="b" style="left:1723.00px;top:659.10px;width:27.40px;height:618.80px;background:#0a0a0a;"></div>
<div class="b" style="left:1726.40px;top:661.00px;width:21.40px;height:317.80px;background:#4f4f4f;border-radius:11px;"></div>
<div class="b" style="left:1787.00px;top:133.00px;width:1562.00px;height:890.00px;background:#111111;"></div>
<div class="b" style="left:1787.00px;top:591.50px;width:1564.00px;height:32.40px;background:#2c2c2c;border:1.1px solid #474747;"></div>
<span class="t" style="left:1824.70px;top:147.30px;letter-spacing:-0.162px;color:#34817f;">1</span>
<span class="t" style="left:1863.00px;top:147.30px;letter-spacing:-0.162px;"><i style="color:#5c9cdc">struct </i><i style="color:#b9b9b9">MyTemplateStruct</i><i style="color:#808080">&lt;</i><i style="color:#b9b9b9">T</i><i style="color:#808080">&gt; {</i></span>
<span class="t" style="left:1824.70px;top:179.30px;letter-spacing:-0.162px;color:#34817f;">2</span>
<span class="t" style="left:1863.00px;top:179.30px;letter-spacing:-0.162px;">  <i style="color:#b9b9b9">T member</i><i style="color:#808080">;</i></span>
<span class="t" style="left:1824.70px;top:211.30px;letter-spacing:-0.162px;color:#34817f;">3</span>
<span class="t" style="left:1863.00px;top:211.30px;letter-spacing:-0.162px;"><i style="color:#808080">};</i></span>
<span class="t" style="left:1824.70px;top:243.30px;letter-spacing:-0.162px;color:#34817f;">4</span>
<span class="t" style="left:1824.70px;top:275.30px;letter-spacing:-0.162px;color:#34817f;">5</span>
<span class="t" style="left:1863.00px;top:275.30px;letter-spacing:-0.162px;"><i style="color:#5c9cdc">union </i><i style="color:#b9b9b9">MyTemplateUnion</i><i style="color:#808080">&lt;</i><i style="color:#b9b9b9">Type1</i><i style="color:#808080">, </i><i style="color:#b9b9b9">Type2</i><i style="color:#808080">&gt; {</i></span>
<span class="t" style="left:1824.70px;top:307.30px;letter-spacing:-0.162px;color:#34817f;">6</span>
<span class="t" style="left:1863.00px;top:307.30px;letter-spacing:-0.162px;">  <i style="color:#b9b9b9">Type1 value1</i><i style="color:#808080">;</i></span>
<span class="t" style="left:1824.70px;top:339.30px;letter-spacing:-0.162px;color:#34817f;">7</span>
<span class="t" style="left:1863.00px;top:339.30px;letter-spacing:-0.162px;">  <i style="color:#b9b9b9">Type2 value2</i><i style="color:#808080">;</i></span>
<span class="t" style="left:1824.70px;top:371.30px;letter-spacing:-0.162px;color:#34817f;">8</span>
<span class="t" style="left:1863.00px;top:371.30px;letter-spacing:-0.162px;"><i style="color:#808080">};</i></span>
<span class="t" style="left:1824.70px;top:403.30px;letter-spacing:-0.162px;color:#34817f;">9</span>
<span class="t" style="left:1810.70px;top:435.30px;letter-spacing:-0.162px;color:#34817f;">10</span>
<span class="t" style="left:1863.00px;top:435.30px;letter-spacing:-0.162px;"><i style="color:#5c9cdc">using </i><i style="color:#b9b9b9">MyTemplateUsing</i><i style="color:#808080">&lt;</i><i style="color:#b9b9b9">Type1</i><i style="color:#808080">&gt; = </i><i style="color:#b9b9b9">MyTemplateUnion</i><i style="color:#808080">&lt;</i><i style="color:#b9b9b9">Type1</i><i style="color:#808080">, </i><i style="color:#6cc49c">u64</i><i style="color:#808080">&gt;;</i></span>
<span class="t" style="left:1810.70px;top:467.30px;letter-spacing:-0.162px;color:#34817f;">11</span>
<span class="t" style="left:1863.00px;top:467.30px;letter-spacing:-0.162px;"><i style="color:#b9b9b9">MyTemplateUnion</i><i style="color:#808080">&lt;</i><i style="color:#6cc49c">u32</i><i style="color:#808080">, </i><i style="color:#6cc49c">u64</i><i style="color:#808080">&gt; </i><i style="color:#b9b9b9">myConcreteUnion01 </i><i style="color:#808080">@ </i><i style="color:#6ef040">0x00</i><i style="color:#808080">;</i></span>
<span class="t" style="left:1810.70px;top:499.30px;letter-spacing:-0.162px;color:#34817f;">12</span>
<span class="t" style="left:1863.00px;top:499.30px;letter-spacing:-0.162px;"><i style="color:#b9b9b9">MyTemplateUsing</i><i style="color:#808080">&lt;</i><i style="color:#6cc49c">u32</i><i style="color:#808080">&gt;      </i><i style="color:#b9b9b9">myConcreteUnion02 </i><i style="color:#808080">@ </i><i style="color:#6ef040">0x00</i><i style="color:#808080">;</i></span>
<span class="t" style="left:1810.70px;top:531.30px;letter-spacing:-0.162px;color:#34817f;">13</span>
<span class="t" style="left:1810.70px;top:563.30px;letter-spacing:-0.162px;color:#34817f;">14</span>
<span class="t" style="left:1810.70px;top:595.30px;letter-spacing:-0.162px;color:#34817f;">15</span>
<span class="t" style="left:1810.70px;top:627.30px;letter-spacing:-0.162px;color:#34817f;">16</span>
<span class="t" style="left:1863.00px;top:627.30px;letter-spacing:-0.162px;"><i style="color:#5c9cdc">struct </i><i style="color:#b9b9b9">MyType </i><i style="color:#808080">{</i></span>
<span class="t" style="left:1810.70px;top:659.30px;letter-spacing:-0.162px;color:#34817f;">17</span>
<span class="t" style="left:1863.00px;top:659.30px;letter-spacing:-0.162px;">    <i style="color:#6cc49c">u8   </i><i style="color:#b9b9b9">x</i><i style="color:#808080">, </i><i style="color:#b9b9b9">y</i><i style="color:#808080">, </i><i style="color:#b9b9b9">z</i><i style="color:#808080">;                         </i><i style="color:#3d7d37">// Regular members</i></span>
<span class="t" style="left:1810.70px;top:691.30px;letter-spacing:-0.162px;color:#34817f;">18</span>
<span class="t" style="left:1863.00px;top:691.30px;letter-spacing:-0.162px;">    <i style="color:#6cc49c">float </i><i style="color:#b9b9b9">localVariable </i><i style="color:#808080">= </i><i style="color:#6ef040">0.5 </i><i style="color:#808080">[[</i><i style="color:#b9b9b9">export</i><i style="color:#808080">]]; </i><i style="color:#3d7d37">// Local variable</i></span>
<span class="t" style="left:1810.70px;top:723.30px;letter-spacing:-0.162px;color:#34817f;">19</span>
<span class="t" style="left:1863.00px;top:723.30px;letter-spacing:-0.162px;"><i style="color:#808080">};</i></span>
<span class="t" style="left:1810.70px;top:755.30px;letter-spacing:-0.162px;color:#34817f;">20</span>
<span class="t" style="left:1863.00px;top:755.30px;letter-spacing:-0.162px;"><i style="color:#b9b9b9">MyType mt </i><i style="color:#808080">@</i><i style="color:#6ef040">0x00</i><i style="color:#808080">;</i></span>
<span class="t" style="left:1810.70px;top:787.30px;letter-spacing:-0.162px;color:#34817f;">21</span>
<span class="t" style="left:1810.70px;top:819.30px;letter-spacing:-0.162px;color:#34817f;">22</span>
<span class="t" style="left:1810.70px;top:851.30px;letter-spacing:-0.162px;color:#34817f;">23</span>
<span class="t" style="left:1863.00px;top:851.30px;letter-spacing:-0.162px;"><i style="color:#5c9cdc">struct </i><i style="color:#b9b9b9">Array</i><i style="color:#808080">&lt;</i><i style="color:#b9b9b9">T</i><i style="color:#808080">, </i><i style="color:#6cc49c">auto </i><i style="color:#b9b9b9">Size</i><i style="color:#808080">&gt; {</i></span>
<span class="t" style="left:1810.70px;top:883.30px;letter-spacing:-0.162px;color:#34817f;">24</span>
<span class="t" style="left:1863.00px;top:883.30px;letter-spacing:-0.162px;">  <i style="color:#b9b9b9">T data</i><i style="color:#808080">[</i><i style="color:#b9b9b9">Size</i><i style="color:#808080">];</i></span>
<span class="t" style="left:1810.70px;top:915.30px;letter-spacing:-0.162px;color:#34817f;">25</span>
<span class="t" style="left:1863.00px;top:915.30px;letter-spacing:-0.162px;"><i style="color:#808080">};</i></span>
<span class="t" style="left:1810.70px;top:947.30px;letter-spacing:-0.162px;color:#34817f;">26</span>
<span class="t" style="left:1863.00px;top:947.30px;letter-spacing:-0.162px;"><i style="color:#b9b9b9">Array</i><i style="color:#808080">&lt;</i><i style="color:#6cc49c">u8</i><i style="color:#808080">, </i><i style="color:#6ef040">0x10</i><i style="color:#808080">&gt; </i><i style="color:#b9b9b9">array </i><i style="color:#808080">@ </i><i style="color:#6ef040">0x00</i><i style="color:#808080">;</i></span>
<span class="t" style="left:1810.70px;top:979.30px;letter-spacing:-0.162px;color:#34817f;">27</span>
<div class="b" style="left:3327.00px;top:147.00px;width:22.00px;height:458.00px;background:#4f4f4f;"></div>
<div class="b" style="left:1787.00px;top:1031.00px;width:1561.00px;height:8.20px;background:#2b466e;"></div>
<div class="b" style="left:1787.00px;top:1048.00px;width:114.70px;height:42.00px;background:#426eb0;border-radius:9px 9px 0 0;"></div>
<span class="t" style="left:1794.90px;top:1056.80px;letter-spacing:-0.162px;">Console</span>
<div class="b" style="left:1910.30px;top:1048.00px;width:311.40px;height:42.00px;background:#33517f;border-radius:9px 9px 0 0;"></div>
<span class="t" style="left:1918.20px;top:1056.80px;letter-spacing:-0.162px;">Environment Variables</span>
<div class="b" style="left:2230.00px;top:1048.00px;width:128.60px;height:42.00px;background:#33517f;border-radius:9px 9px 0 0;"></div>
<span class="t" style="left:2237.90px;top:1056.80px;letter-spacing:-0.162px;">Settings</span>
<div class="b" style="left:2367.00px;top:1048.00px;width:128.50px;height:42.00px;background:#33517f;border-radius:9px 9px 0 0;"></div>
<span class="t" style="left:2374.90px;top:1056.80px;letter-spacing:-0.162px;">Sections</span>
<div class="b" style="left:2504.00px;top:1048.00px;width:268.80px;height:42.00px;background:#33517f;border-radius:9px 9px 0 0;"></div>
<span class="t" style="left:2511.90px;top:1056.80px;letter-spacing:-0.162px;">Virtual Filesystem</span>
<div class="b" style="left:2781.40px;top:1048.00px;width:128.60px;height:42.00px;background:#33517f;border-radius:9px 9px 0 0;"></div>
<span class="t" style="left:2789.30px;top:1056.80px;letter-spacing:-0.162px;">Debugger</span>
<div class="b" style="left:1779.00px;top:1089.60px;width:1577.00px;height:1.30px;background:#3a66a8;"></div>
<div class="b" style="left:1786.40px;top:1099.20px;width:1562.40px;height:132.00px;border:2px solid #42424b;"></div>
<span class="t" style="left:1813.90px;top:1118.90px;letter-spacing:-0.162px;color:#808080;">I: Pattern exited with code: 0</span>
<span class="t" style="left:1813.90px;top:1150.80px;letter-spacing:-0.162px;color:#808080;">I: Evaluation took 0.0026467s</span>
<div class="b" style="left:3322.00px;top:1102.00px;width:22.00px;height:93.00px;background:#4a4a4a;"></div>
<div class="b" style="left:1787.00px;top:1246.00px;width:47.80px;height:43.80px;background:#2b456c;border:1px solid #3e5478;"></div>
<svg class="b" style="left:1797.00px;top:1252.00px;" width="28" height="32" viewBox="0 0 28 32"><path d="M8.8 6.2 L23.4 15.6 L8.8 25 Z" fill="none" stroke="#6bb566" stroke-width="2.5" stroke-linejoin="round"/></svg>
<div class="b" style="left:1851.00px;top:1246.00px;width:44.00px;height:43.80px;background:#1d2f49;"></div>
<span class="t" style="left:1904.10px;top:1255.10px;letter-spacing:-0.162px;">Auto evaluate</span>
<div class="b" style="left:2101.00px;top:1246.00px;width:1.20px;height:44.00px;background:#3a3a40;"></div>
<span class="t" style="left:2117.90px;top:1255.10px;letter-spacing:-0.162px;">17 / 1048576</span>
<div class="b" style="left:0.00px;top:1302.90px;width:3358.00px;height:1.20px;background:#3e3e47;"></div>
<span class="t" style="left:3.70px;top:1315.10px;letter-spacing:-0.162px;">0x00 - 0x01 (0x02 | 2 bytes)</span>
<div class="b" style="left:412.00px;top:1311.00px;width:1.20px;height:31.50px;background:#3a3a40;"></div>
<div class="b" style="left:0.00px;top:0.00px;width:1.20px;height:1348.00px;background:#34363a;"></div>
</div></body></html>
